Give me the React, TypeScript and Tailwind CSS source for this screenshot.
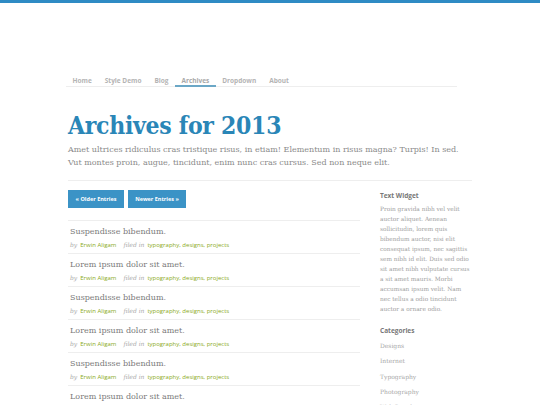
const nav = ["Home", "Style Demo", "Blog", "Archives", "Dropdown", "About"];

const posts = [
  "Suspendisse bibendum.",
  "Lorem ipsum dolor sit amet.",
  "Suspendisse bibendum.",
  "Lorem ipsum dolor sit amet.",
  "Suspendisse bibendum.",
  "Lorem ipsum dolor sit amet.",
];

const categories = ["Designs", "Internet", "Typography", "Photography", "Web Development"];

const serif = "font-['DejaVu_Serif',serif]";
const sans = "font-['Open_Sans','Noto_Sans',sans-serif]";

export default function App() {
  return (
    <div className="h-[405px] overflow-hidden bg-white">
      <div className="h-[3px] bg-[#2e8bc4]" />

      <div className="ml-[66px] w-[406px] pt-[73px]">
        <nav className={`flex w-[391px] border-b border-[#eeeeee] ${sans}`}>
          {nav.map((item) => (
            <a
              key={item}
              className={`-mb-px px-[6.5px] text-[6.5px] font-bold leading-[9px] ${
                item === "Archives"
                  ? "border-b-2 border-[#6ba7c6] text-[#a8a8a8]"
                  : "border-b-2 border-transparent text-[#b4b4b4]"
              }`}
            >
              {item}
            </a>
          ))}
        </nav>

        <div className="pl-[2px]">
          <h1 className="mt-[23px] font-['DejaVu_Serif_Condensed','DejaVu_Serif',serif] text-[24.5px] font-semibold leading-[32px] tracking-[-0.3px] text-[#2a86b7]">
            Archives for 2013
          </h1>
          <p className={`mt-[1px] text-[8px] leading-[13px] text-[#8a8a8a] ${serif}`}>
            Amet ultrices ridiculus cras tristique risus, in etiam! Elementum in risus magna? Turpis! In sed.
            <br />
            Vut montes proin, augue, tincidunt, enim nunc cras cursus. Sed non neque elit.
          </p>
          <div className="mt-[11px] border-t border-[#eeeeee]" />

          <div className="mt-[9px] flex gap-[20px]">
            <div className="w-[292px]">
              <div className={`flex gap-[4px] ${sans}`}>
                <button className="h-[18px] w-[56px] bg-[#3b93c6] text-[5.5px] font-bold text-white">
                  « Older Entries
                </button>
                <button className="h-[18px] w-[58px] bg-[#3b93c6] text-[5.5px] font-bold text-white">
                  Newer Entries »
                </button>
              </div>

              <div className="mt-[12px] flex flex-col">
                {posts.map((title, i) => (
                  <div key={i} className="h-[33px] border-t border-[#eeeeee] pl-[2px] pt-[5px]">
                    <div className={`text-[8px] leading-[11px] text-[#7a7a7a] ${serif}`}>{title}</div>
                    <div className="mt-[3px] flex items-baseline text-[6px] leading-[9px]">
                      <span className={`italic text-[#aaaaaa] ${serif}`}>by</span>
                      <span className={`ml-[3px] text-[#8aaa1c] ${sans}`}>Erwin Aligam</span>
                      <span className={`ml-[7px] italic text-[#aaaaaa] ${serif}`}>filed in</span>
                      <span className={`ml-[3px] text-[#8aaa1c] ${sans}`}>typography, designs, projects</span>
                    </div>
                  </div>
                ))}
              </div>
            </div>

            <aside className="w-[92px] pt-[1px]">
              <h3 className={`text-[6.5px] font-bold leading-[9px] text-[#777777] ${sans}`}>Text Widget</h3>
              <p className={`mt-[4px] text-[5.8px] leading-[10px] text-[#a0a0a0] ${serif}`}>
                Proin gravida nibh vel velit auctor aliquet. Aenean sollicitudin, lorem quis bibendum auctor, nisi
                elit consequat ipsum, nec sagittis sem nibh id elit. Duis sed odio sit amet nibh vulputate cursus a
                sit amet mauris. Morbi accumsan ipsum velit. Nam nec tellus a odio tincidunt auctor a ornare odio.
              </p>
              <h3 className={`mt-[12px] text-[6.5px] font-bold leading-[9px] text-[#777777] ${sans}`}>Categories</h3>
              <ul className={`mt-[6px] ${serif}`}>
                {categories.map((c) => (
                  <li key={c} className="h-[15.3px] text-[6px] leading-[10px] text-[#a8a8a8]">
                    {c}
                  </li>
                ))}
              </ul>
            </aside>
          </div>
        </div>
      </div>
    </div>
  );
}
